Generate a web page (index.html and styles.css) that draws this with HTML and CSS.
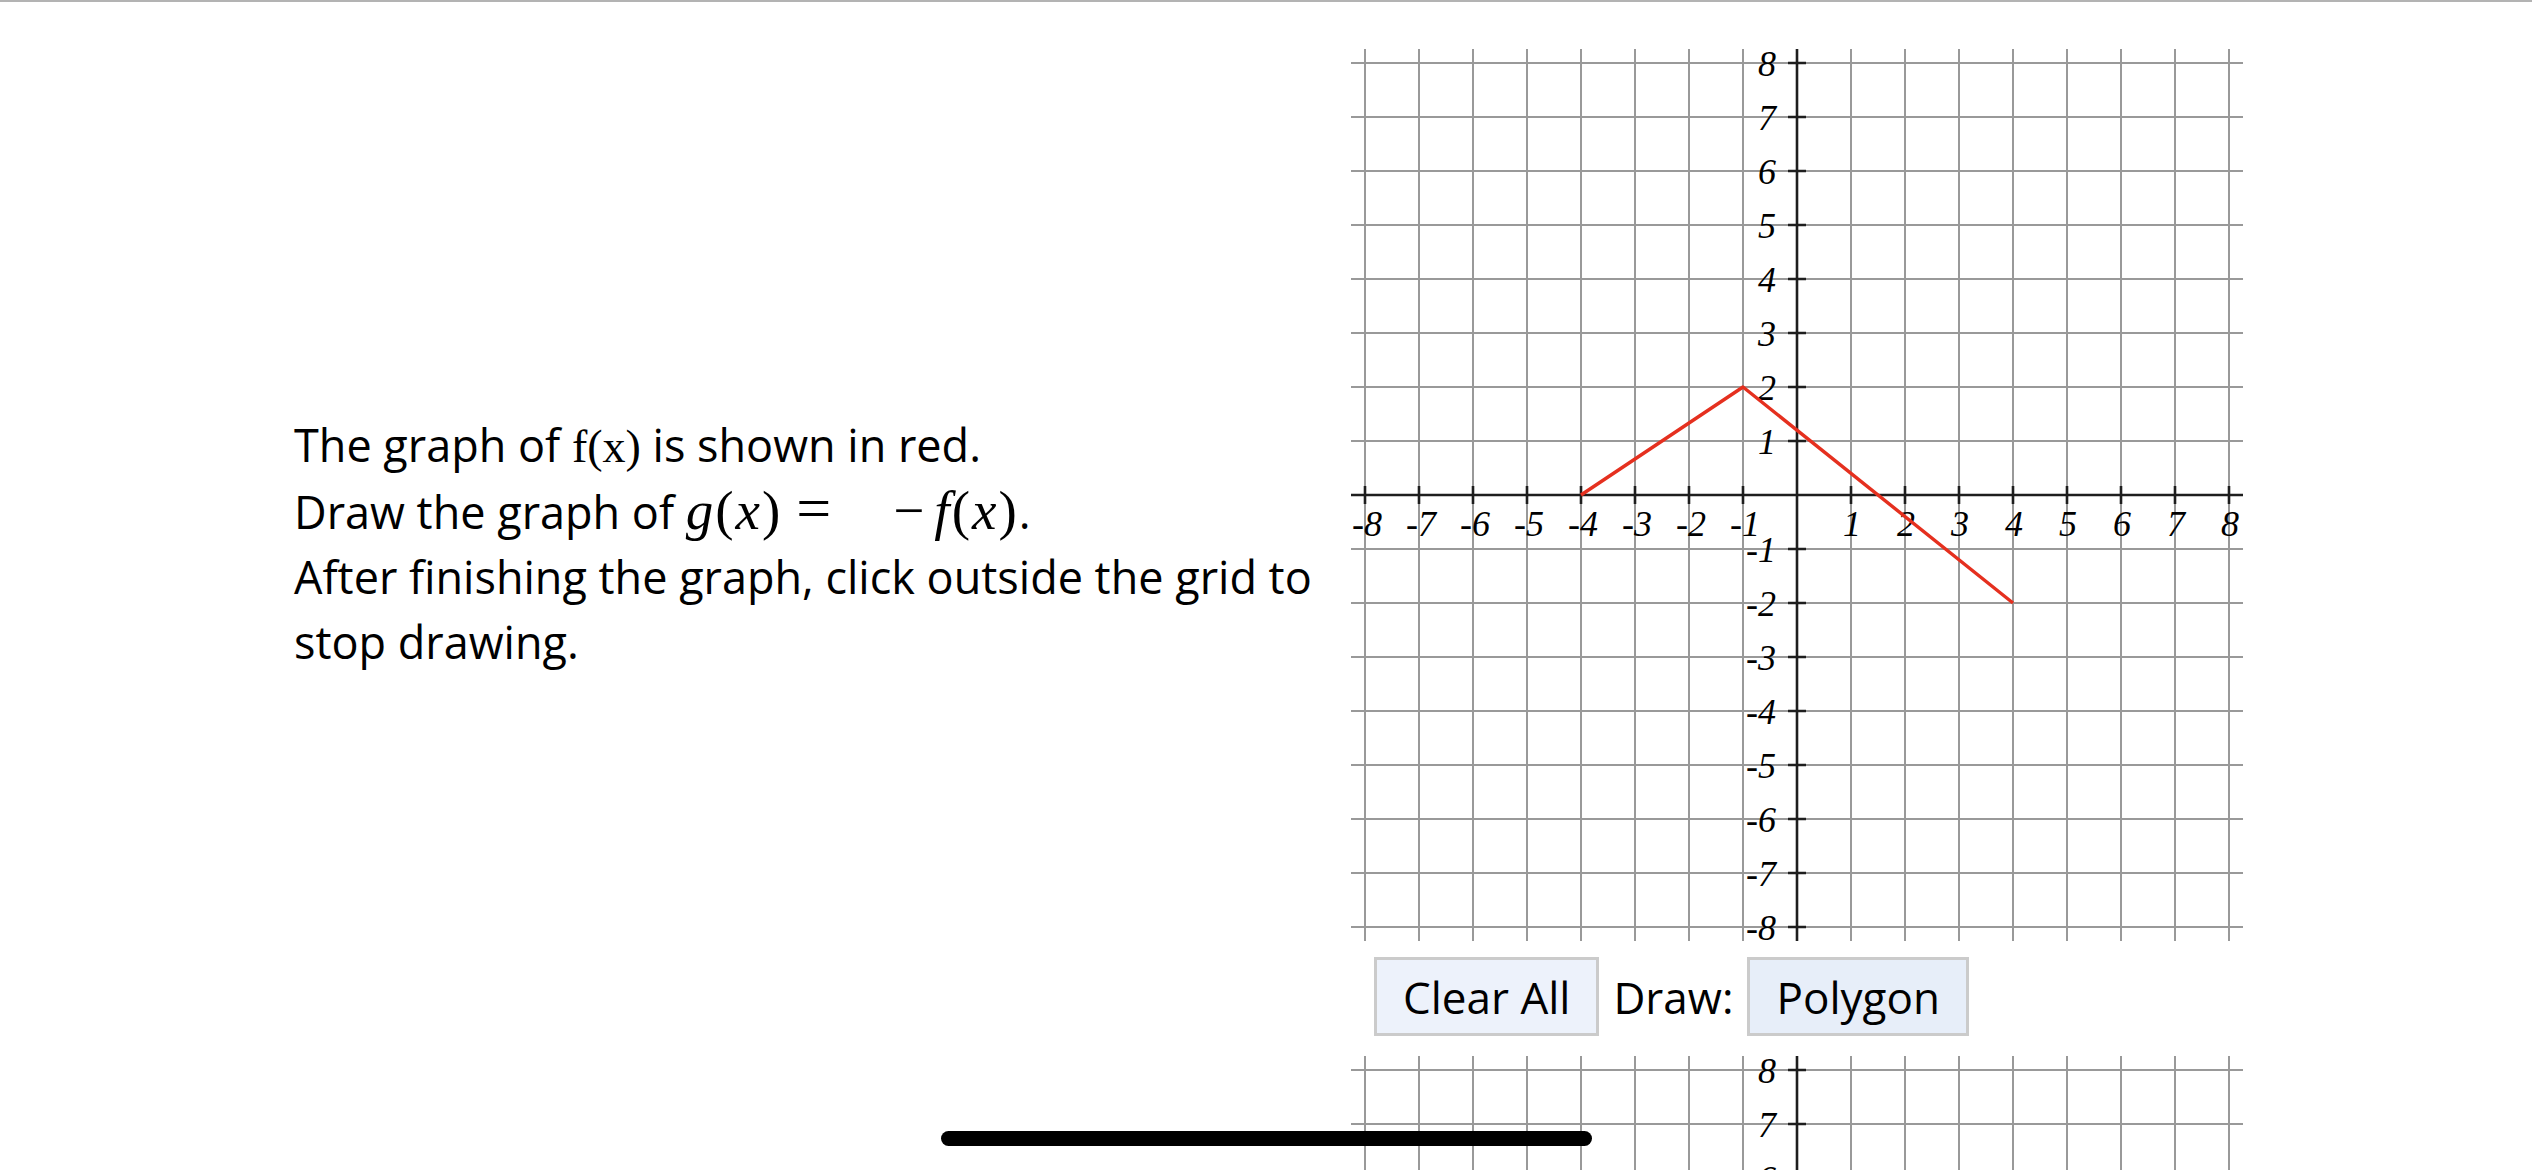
FILE: index.html
```html
<!DOCTYPE html>
<html lang="en">
<head>
<meta charset="utf-8">
<title>Graph transformation</title>
<link rel="stylesheet" href="styles.css">
</head>
<body>
<main class="page">
  <section class="row row-first">
    <div class="prompt">
      <div class="line">The graph of <span class="tm">f(x)</span> is shown in red.</div>
      <div class="line">Draw the graph of <span class="math"><i>g</i><span class="p">(</span><i>x</i><span class="p">)</span><span class="op op-eq">=</span><span class="op op-minus">−</span><i>f</i><span class="p">(</span><i>x</i><span class="p">)</span></span>.</div>
      <div class="line">After finishing the graph, click outside the grid to stop drawing.</div>
    </div>
    <div class="graph-col">
      <div class="board">
        <svg class="board-svg" viewBox="0 0 892 892" width="892" height="892" xmlns="http://www.w3.org/2000/svg">
          <defs>
            <pattern id="grid1" x="-13" y="-13" width="54" height="54" patternUnits="userSpaceOnUse">
              <path d="M27 0V54M0 27H54" stroke="#999" stroke-width="2" fill="none"/>
            </pattern>
          </defs>
          <rect width="892" height="892" fill="#fff"/>
          <rect width="892" height="892" fill="url(#grid1)"/>
          <path d="M0 446H892M446 0V892" stroke="#1e1e1e" stroke-width="2.6" fill="none"/>
          <path d="M437 14H455M437 68H455M437 122H455M437 176H455M437 230H455M437 284H455M437 338H455M437 392H455M437 500H455M437 554H455M437 608H455M437 662H455M437 716H455M437 770H455M437 824H455M437 878H455M14 437V455M68 437V455M122 437V455M176 437V455M230 437V455M284 437V455M338 437V455M392 437V455M500 437V455M554 437V455M608 437V455M662 437V455M716 437V455M770 437V455M824 437V455M878 437V455" stroke="#1e1e1e" stroke-width="2.6" fill="none"/>
          <g class="ylab">
            <text x="425" y="26.5">8</text><text x="425" y="80.5">7</text><text x="425" y="134.5">6</text><text x="425" y="188.5">5</text>
            <text x="425" y="242.5">4</text><text x="425" y="296.5">3</text><text x="425" y="350.5">2</text><text x="425" y="404.5">1</text>
            <text x="425" y="512.5">-1</text><text x="425" y="566.5">-2</text><text x="425" y="620.5">-3</text><text x="425" y="674.5">-4</text>
            <text x="425" y="728.5">-5</text><text x="425" y="782.5">-6</text><text x="425" y="836.5">-7</text><text x="425" y="890.5">-8</text>
          </g>
          <g class="xlab">
            <text x="16" y="487">-8</text><text x="70" y="487">-7</text><text x="124" y="487">-6</text><text x="178" y="487">-5</text>
            <text x="232" y="487">-4</text><text x="286" y="487">-3</text><text x="340" y="487">-2</text><text x="394" y="487">-1</text>
            <text x="501" y="487">1</text><text x="555" y="487">2</text><text x="609" y="487">3</text><text x="663" y="487">4</text>
            <text x="717" y="487">5</text><text x="771" y="487">6</text><text x="825" y="487">7</text><text x="879" y="487">8</text>
          </g>
          <polyline points="230,446 392,338 662,554" fill="none" stroke="#e5301f" stroke-width="3.4" stroke-linejoin="round"/>
        </svg>
      </div>
      <div class="controls">
        <button class="btn btn-clear" type="button">Clear All</button>
        <span class="draw-label">Draw:</span>
        <button class="btn btn-mode" type="button">Polygon</button>
      </div>
    </div>
  </section>
  <section class="row row-second">
    <div class="prompt"></div>
    <div class="graph-col">
      <div class="board">
        <svg class="board-svg" viewBox="0 0 892 892" width="892" height="892" xmlns="http://www.w3.org/2000/svg">
          <defs>
            <pattern id="grid2" x="-13" y="-13" width="54" height="54" patternUnits="userSpaceOnUse">
              <path d="M27 0V54M0 27H54" stroke="#999" stroke-width="2" fill="none"/>
            </pattern>
          </defs>
          <rect width="892" height="892" fill="#fff"/>
          <rect width="892" height="892" fill="url(#grid2)"/>
          <path d="M0 446H892M446 0V892" stroke="#1e1e1e" stroke-width="2.6" fill="none"/>
          <path d="M437 14H455M437 68H455M437 122H455M437 176H455M437 230H455M437 284H455M437 338H455M437 392H455M437 500H455M437 554H455M437 608H455M437 662H455M437 716H455M437 770H455M437 824H455M437 878H455M14 437V455M68 437V455M122 437V455M176 437V455M230 437V455M284 437V455M338 437V455M392 437V455M500 437V455M554 437V455M608 437V455M662 437V455M716 437V455M770 437V455M824 437V455M878 437V455" stroke="#1e1e1e" stroke-width="2.6" fill="none"/>
          <g class="ylab">
            <text x="425" y="26.5">8</text><text x="425" y="80.5">7</text><text x="425" y="134.5">6</text><text x="425" y="188.5">5</text>
            <text x="425" y="242.5">4</text><text x="425" y="296.5">3</text><text x="425" y="350.5">2</text><text x="425" y="404.5">1</text>
            <text x="425" y="512.5">-1</text><text x="425" y="566.5">-2</text><text x="425" y="620.5">-3</text><text x="425" y="674.5">-4</text>
            <text x="425" y="728.5">-5</text><text x="425" y="782.5">-6</text><text x="425" y="836.5">-7</text><text x="425" y="890.5">-8</text>
          </g>
          <g class="xlab">
            <text x="16" y="487">-8</text><text x="70" y="487">-7</text><text x="124" y="487">-6</text><text x="178" y="487">-5</text>
            <text x="232" y="487">-4</text><text x="286" y="487">-3</text><text x="340" y="487">-2</text><text x="394" y="487">-1</text>
            <text x="501" y="487">1</text><text x="555" y="487">2</text><text x="609" y="487">3</text><text x="663" y="487">4</text>
            <text x="717" y="487">5</text><text x="771" y="487">6</text><text x="825" y="487">7</text><text x="879" y="487">8</text>
          </g>
        </svg>
      </div>
    </div>
  </section>
</main>
<div class="home-indicator"></div>
</body>
</html>
```

FILE: styles.css
```css
html, body {
  margin: 0;
  padding: 0;
  background: #fff;
}

body {
  border-top: 2px solid #b3b3b3;
  font-family: "Open Sans", "Liberation Sans", sans-serif;
  color: #000;
  overflow: hidden;
}

.page {
  display: flex;
  flex-direction: column;
  gap: 20px;
}

.row {
  display: grid;
  grid-template-columns: 1057px 892px;
  padding-left: 294px;
  align-items: center;
}

.row-first {
  padding-top: 47px;
}

.prompt {
  font-size: 45px;
  line-height: 65px;
  width: 1040px;
}

.line {
  display: block;
}

.tm {
  font-family: "Liberation Serif", "Times New Roman", serif;
  font-size: 46px;
}

.math {
  font-family: "Liberation Serif", "DejaVu Serif", serif;
  font-size: 55px;
  line-height: 0;
}

.math i {
  font-style: italic;
}

.math .p {
  font-style: normal;
  padding: 0 2px;
}

.math .op {
  display: inline-block;
}

.math .op-eq {
  margin-left: 14px;
  font-size: 62px;
}

.math .op-minus {
  margin-left: 62px;
  margin-right: 10px;
}

.graph-col {
  display: flex;
  flex-direction: column;
}

.board {
  width: 892px;
  height: 892px;
}

.board-svg {
  display: block;
}

.ylab text,
.xlab text {
  font-family: "Liberation Serif", "Times New Roman", serif;
  font-style: italic;
  font-size: 36px;
  fill: #000;
}

.ylab text {
  text-anchor: end;
}

.xlab text {
  text-anchor: middle;
}

.controls {
  display: flex;
  align-items: center;
  gap: 14px;
  margin-top: 16px;
  padding-left: 23px;
  height: 79px;
}

.btn {
  font-family: "Open Sans", "Liberation Sans", sans-serif;
  font-size: 44px;
  color: #000;
  height: 79px;
  border: 3px solid #cbcbcb;
  border-radius: 0;
  padding: 0 26px;
  margin: 0;
  line-height: 1;
  white-space: nowrap;
}

.btn-clear {
  background: #edf2fb;
}

.btn-mode {
  background: #e7eef9;
}

.draw-label {
  font-size: 44px;
}

.home-indicator {
  position: fixed;
  left: 941px;
  top: 1131px;
  width: 651px;
  height: 15px;
  border-radius: 8px;
  background: #000;
}
```
